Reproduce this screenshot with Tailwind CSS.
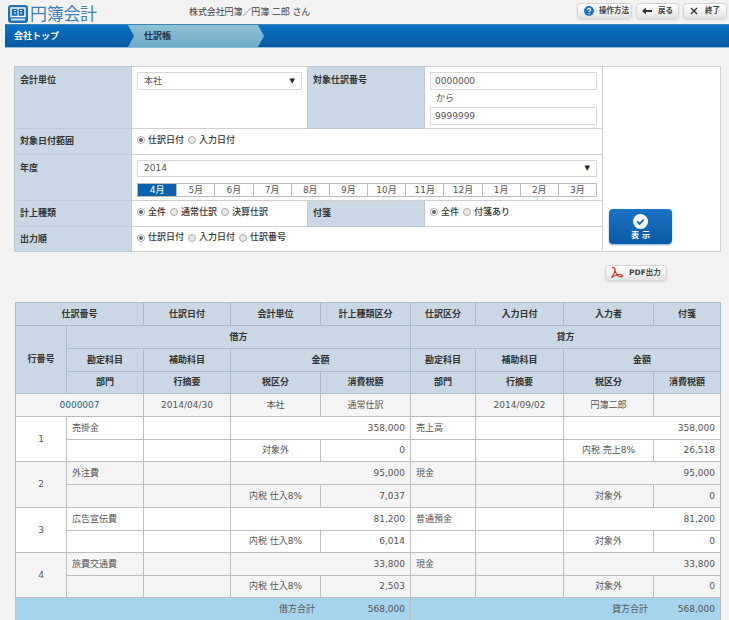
<!DOCTYPE html>
<html lang="ja">
<head>
<meta charset="utf-8">
<script src="https://cdn.jsdelivr.net/npm/@tailwindcss/browser@4"></script>
</head>
<body class="h-[620px] overflow-hidden bg-[#f3f3f3] text-[9px] leading-none text-[#555] [font-family:'DejaVu_Sans','Noto_Sans_CJK_JP',sans-serif]">

<header class="flex h-6 items-center pl-2 pr-0.5">
  <svg viewBox="0 0 20 18" class="mt-[3px] h-[18px] w-5 shrink-0">
    <rect width="20" height="18" rx="3" fill="#1f6fb5"/>
    <rect x="3" y="3" width="14" height="8.5" fill="none" stroke="#fff" stroke-width="1.4"/>
    <path d="M10 3v8.5M6 5.5h2M6 8h2M12 5.5h2M12 8h2" stroke="#fff" stroke-width="1"/>
    <rect x="3" y="13.5" width="14" height="2" fill="#cfe3f4"/>
  </svg>
  <span class="ml-[2px] w-[69px] text-[17px] font-normal tracking-[-0.3px] text-[#3f7fb8] [font-family:'Noto_Sans_CJK_JP',sans-serif]">円簿会計</span>
  <span class="ml-[90px] text-[9px] tracking-[-0.1px] text-[#444]">株式会社円簿／円簿 二郎 さん</span>
  <div class="ml-auto flex gap-1 pb-0.5 text-[7.5px] font-bold text-[#444]">
    <button class="flex h-4 w-[55px] items-center rounded-sm border border-[#d5d5d5] bg-gradient-to-b from-white to-[#e4e4e4] pl-1.5 shadow-sm">
      <svg viewBox="0 0 10 10" class="mr-[5px] size-2.5"><circle cx="5" cy="5" r="5" fill="#1c75bc"/><path d="M3.5 3.9c0-2 3-2 3 0 0 1.1-1.5 1-1.5 2.2" fill="none" stroke="#fff" stroke-width="1.1"/><circle cx="5" cy="7.8" r=".7" fill="#fff"/></svg>操作方法
    </button>
    <button class="flex h-4 w-[43px] items-center rounded-sm border border-[#d5d5d5] bg-gradient-to-b from-white to-[#e4e4e4] pl-[5px] shadow-sm">
      <svg viewBox="0 0 10 8" class="mr-[6px] h-2 w-2.5"><path d="M0 4l4-3.5V3h6v2H4v2.5z" fill="#333"/></svg>戻る
    </button>
    <button class="flex h-4 w-[44px] items-center rounded-sm border border-[#d5d5d5] bg-gradient-to-b from-white to-[#e4e4e4] pl-[6px] shadow-sm">
      <svg viewBox="0 0 8 8" class="mr-[7px] size-2"><path d="M1 1l6 6M7 1L1 7" stroke="#333" stroke-width="1.4"/></svg>終了
    </button>
  </div>
</header>

<nav class="ml-[5px] flex h-[23px] items-stretch border-t border-[#3f86b5] bg-gradient-to-b from-[#0b72c4] to-[#0758a0] shadow-[0_1px_0_#8fc0da]">
  <div class="flex w-[123px] items-center pl-[9px] font-bold text-white">会社トップ</div>
  <div class="flex w-[136px] items-center bg-gradient-to-b from-[#8fc2d8] to-[#6fa9c8] pl-[16px] font-bold text-[#234] [clip-path:polygon(0_0,130px_0,136px_50%,130px_100%,0_100%,6px_50%)]">仕訳帳</div>
</nav>

<form class="ml-[14px] mt-[19px] w-[706px]">
  <table class="w-[706px] table-fixed border-collapse bg-white [&_td]:border [&_td]:border-[#cfcfcf] [&_th]:border [&_th]:border-[#bcc8d2] [&_th]:bg-[#c9d8e4] [&_th]:pl-[5px] [&_th]:text-left [&_th]:font-bold [&_th]:text-[#333]">
    <colgroup><col class="w-[117px]"><col class="w-[176px]"><col class="w-[117px]"><col class="w-[178px]"><col class="w-[118px]"></colgroup>
    <tr class="h-[62px]">
      <th class="pt-[9px] align-top">会計単位</th>
      <td class="px-[5px] pt-[5px] align-top">
        <div class="flex h-[18px] items-center justify-between border border-[#d8d8d8] bg-white px-1.5"><span>本社</span><span class="text-[7px] text-[#222]">▼</span></div>
      </td>
      <th class="pt-[9px] align-top">対象仕訳番号</th>
      <td class="px-[5px] pt-[5px] align-top">
        <div class="flex h-[18px] items-center border border-[#d8d8d8] px-1">0000000</div>
        <div class="flex h-[17px] items-center pl-1.5">から</div>
        <div class="flex h-[18px] items-center border border-[#d8d8d8] px-1">9999999</div>
      </td>
      <td rowspan="5" class="pb-[7px] pl-[6px] align-bottom">
        <button class="flex h-[35px] w-[63px] flex-col items-center justify-center rounded-sm bg-gradient-to-b from-[#1a73c6] to-[#0a5aa6] font-bold text-white shadow-[0_1px_2px_#7fb2d4]">
          <svg viewBox="0 0 16 16" class="size-[15px]"><circle cx="8" cy="8" r="8" fill="#fff"/><path d="M4.5 8l2.5 2.5 4.5-4.5" fill="none" stroke="#1466b2" stroke-width="2"/></svg>
          <span class="mt-[3px] pl-[3px] text-[8px] tracking-[3px]">表示</span>
        </button>
      </td>
    </tr>
    <tr class="h-[26px]">
      <th>対象日付範囲</th>
      <td colspan="3" class="pb-[3px] pl-[5px] font-medium text-[#333]">
        <span class="flex items-center"><span class="mr-[3px] flex size-2 items-center justify-center rounded-full border border-[#aaa] bg-white"><span class="size-1 rounded-full bg-[#666]"></span></span>仕訳日付<span class="ml-1 mr-[3px] size-2 rounded-full border border-[#aaa] bg-[#e8e8e8]"></span>入力日付</span>
      </td>
    </tr>
    <tr class="h-[46px]">
      <th class="pt-[9px] align-top">年度</th>
      <td colspan="3" class="px-[5px] pt-[5px] align-top">
        <div class="flex h-[17px] items-center justify-between border border-[#d8d8d8] px-1.5"><span>2014</span><span class="text-[7px] text-[#222]">▼</span></div>
        <div class="mt-[6px] grid h-[14px] grid-cols-12 border border-[#bbb] text-center leading-[12px] [&>span]:border-l [&>span]:border-[#bbb]">
          <span class="!border-l-0 bg-[#0a62ad] text-white">4月</span><span>5月</span><span>6月</span><span>7月</span><span>8月</span><span>9月</span><span>10月</span><span>11月</span><span>12月</span><span>1月</span><span>2月</span><span>3月</span>
        </div>
      </td>
    </tr>
    <tr class="h-[26px]">
      <th>計上種類</th>
      <td class="pb-[3px] pl-[5px] font-medium text-[#333]">
        <span class="flex items-center"><span class="mr-[3px] flex size-2 items-center justify-center rounded-full border border-[#aaa] bg-white"><span class="size-1 rounded-full bg-[#666]"></span></span>全件<span class="ml-1 mr-[3px] size-2 rounded-full border border-[#aaa] bg-[#e8e8e8]"></span>通常仕訳<span class="ml-1 mr-[3px] size-2 rounded-full border border-[#aaa] bg-[#e8e8e8]"></span>決算仕訳</span>
      </td>
      <th>付箋</th>
      <td class="pb-[3px] pl-[5px] font-medium text-[#333]">
        <span class="flex items-center"><span class="mr-[3px] flex size-2 items-center justify-center rounded-full border border-[#aaa] bg-white"><span class="size-1 rounded-full bg-[#666]"></span></span>全件<span class="ml-1 mr-[3px] size-2 rounded-full border border-[#aaa] bg-[#e8e8e8]"></span>付箋あり</span>
      </td>
    </tr>
    <tr class="h-[25px]">
      <th>出力順</th>
      <td colspan="3" class="pb-[3px] pl-[5px] font-medium text-[#333]">
        <span class="flex items-center"><span class="mr-[3px] flex size-2 items-center justify-center rounded-full border border-[#aaa] bg-white"><span class="size-1 rounded-full bg-[#666]"></span></span>仕訳日付<span class="ml-1 mr-[3px] size-2 rounded-full border border-[#aaa] bg-[#e8e8e8]"></span>入力日付<span class="ml-1 mr-[3px] size-2 rounded-full border border-[#aaa] bg-[#e8e8e8]"></span>仕訳番号</span>
      </td>
    </tr>
  </table>
</form>

<div class="mr-[62px] mt-[13px] flex justify-end">
  <button class="flex h-4 w-[62px] items-center rounded-sm border border-[#d5d5d5] bg-gradient-to-b from-white to-[#e4e4e4] pl-[5px] text-[7.5px] font-bold text-[#444] shadow-sm">
    <svg viewBox="0 0 12 12" class="mr-[6px] size-3"><path d="M1 1c1-1 3-.5 3 1.500 0 3-2 6-3.500 8 1.500-1 4-3 7.500-3 2 0 3.500 1 3.500 1.500s-1 1-3 .5C6 9 4 5 4 2" fill="none" stroke="#d8382e" stroke-width="1.200"/></svg>PDF出力
  </button>
</div>

<table class="ml-[15px] mt-[21px] w-[705px] table-fixed border-collapse text-center [&_td]:border [&_td]:border-[#bdbdbd] [&_th]:border [&_th]:border-[#a9bac8] [&_th]:bg-[#c9d8e4] [&_th]:font-bold [&_th]:text-[#333]">
  <colgroup><col class="w-[51px]"><col class="w-[77px]"><col class="w-[87px]"><col class="w-[90px]"><col class="w-[90px]"><col class="w-[65px]"><col class="w-[88px]"><col class="w-[90px]"><col class="w-[67px]"></colgroup>
  <thead>
    <tr class="h-[23px]"><th colspan="2">仕訳番号</th><th>仕訳日付</th><th>会計単位</th><th>計上種類区分</th><th>仕訳区分</th><th>入力日付</th><th>入力者</th><th>付箋</th></tr>
    <tr class="h-[23px]"><th rowspan="3">行番号</th><th colspan="4">借方</th><th colspan="4">貸方</th></tr>
    <tr class="h-[23px]"><th>勘定科目</th><th>補助科目</th><th colspan="2">金額</th><th>勘定科目</th><th>補助科目</th><th colspan="2">金額</th></tr>
    <tr class="h-[22px]"><th>部門</th><th>行摘要</th><th>税区分</th><th>消費税額</th><th>部門</th><th>行摘要</th><th>税区分</th><th>消費税額</th></tr>
  </thead>
  <tbody>
    <tr class="h-[23px] bg-[#f5f5f5]"><td colspan="2"><a class="text-[#1a5f8a]">0000007</a></td><td>2014/04/30</td><td>本社</td><td>通常仕訳</td><td></td><td>2014/09/02</td><td>円簿二郎</td><td></td></tr>

    <tr class="h-[23px] bg-white"><td rowspan="2">1</td><td class="pl-[5px] text-left">売掛金</td><td></td><td colspan="2" class="border-l-2 pr-[5px] text-right">358,000</td><td class="pl-[5px] text-left">売上高</td><td></td><td colspan="2" class="pr-[5px] text-right">358,000</td></tr>
    <tr class="h-[22px] bg-white"><td></td><td></td><td class="border-l-2">対象外</td><td class="pr-[5px] text-right">0</td><td></td><td></td><td>内税 売上8%</td><td class="pr-[5px] text-right">26,518</td></tr>

    <tr class="h-[23px] bg-[#f5f5f5]"><td rowspan="2">2</td><td class="pl-[5px] text-left">外注費</td><td></td><td colspan="2" class="border-l-2 pr-[5px] text-right">95,000</td><td class="pl-[5px] text-left">現金</td><td></td><td colspan="2" class="pr-[5px] text-right">95,000</td></tr>
    <tr class="h-[23px] bg-[#f5f5f5]"><td></td><td></td><td class="border-l-2">内税 仕入8%</td><td class="pr-[5px] text-right">7,037</td><td></td><td></td><td>対象外</td><td class="pr-[5px] text-right">0</td></tr>

    <tr class="h-[23px] bg-white"><td rowspan="2">3</td><td class="pl-[5px] text-left">広告宣伝費</td><td></td><td colspan="2" class="border-l-2 pr-[5px] text-right">81,200</td><td class="pl-[5px] text-left">普通預金</td><td></td><td colspan="2" class="pr-[5px] text-right">81,200</td></tr>
    <tr class="h-[22px] bg-white"><td></td><td></td><td class="border-l-2">内税 仕入8%</td><td class="pr-[5px] text-right">6,014</td><td></td><td></td><td>対象外</td><td class="pr-[5px] text-right">0</td></tr>

    <tr class="h-[23px] bg-[#f5f5f5]"><td rowspan="2">4</td><td class="pl-[5px] text-left">旅費交通費</td><td></td><td colspan="2" class="border-l-2 pr-[5px] text-right">33,800</td><td class="pl-[5px] text-left">現金</td><td></td><td colspan="2" class="pr-[5px] text-right">33,800</td></tr>
    <tr class="h-[22px] bg-[#f5f5f5]"><td></td><td></td><td class="border-l-2">内税 仕入8%</td><td class="pr-[5px] text-right">2,503</td><td></td><td></td><td>対象外</td><td class="pr-[5px] text-right">0</td></tr>

    <tr class="h-[23px] bg-[#a6d4ec]"><td colspan="4" class="!border-[#a6d4ec] pr-[5px] text-right">借方合計</td><td class="pr-[5px] text-right">568,000</td><td colspan="3" class="!border-[#a6d4ec] pr-[5px] text-right">貸方合計</td><td class="pr-[5px] text-right">568,000</td></tr>
  </tbody>
</table>

</body>
</html>
